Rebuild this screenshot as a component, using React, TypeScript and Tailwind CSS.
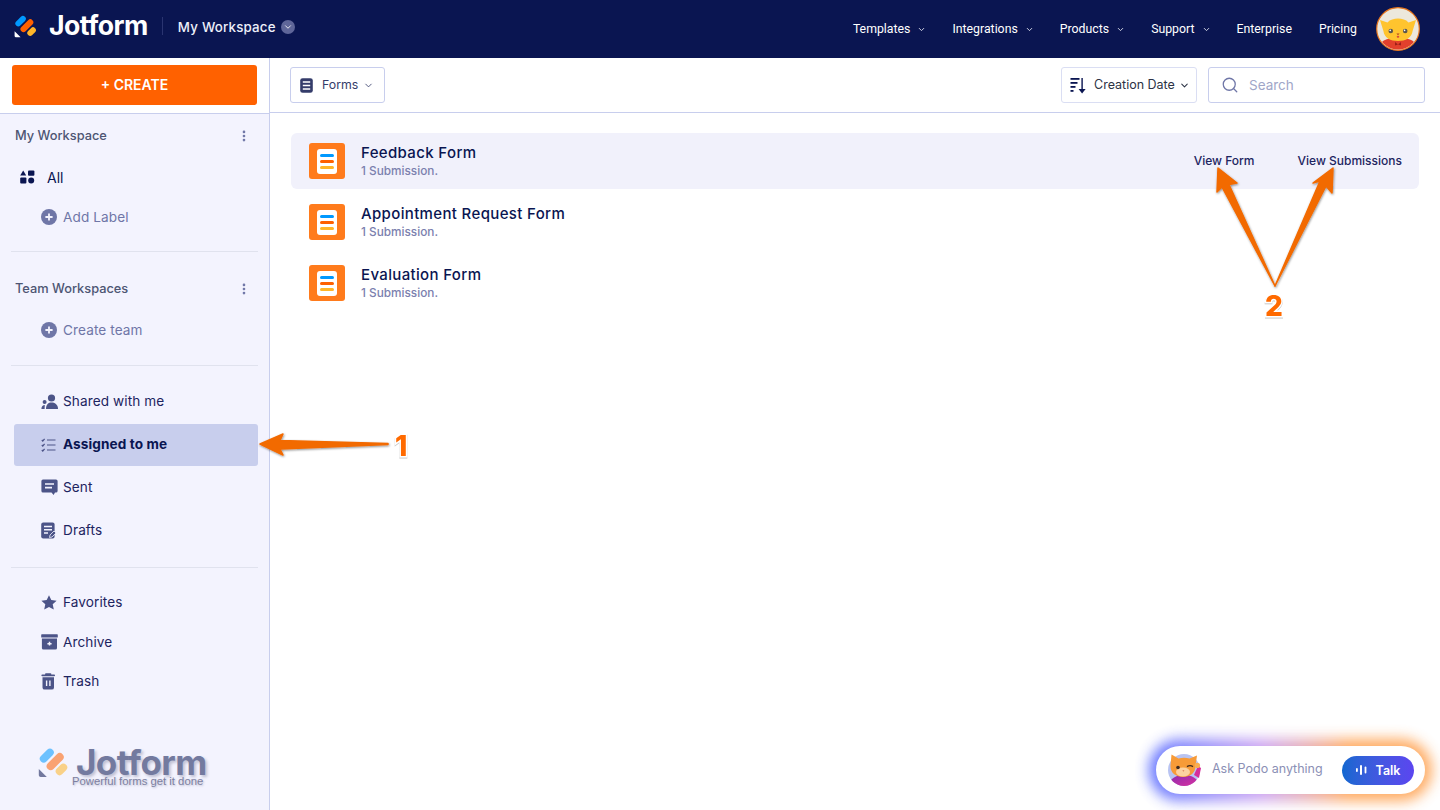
import React from "react";
import { ChevronDown, Search, MoreVertical } from "lucide-react";

const font = "font-['Inter','Liberation_Sans',sans-serif]";

function Logo({ size = 24, muted = false }: { size?: number; muted?: boolean }) {
  return (
    <svg width={size} height={size} viewBox="0 0 24 24" className={`shrink-0 ${muted ? "opacity-55" : ""}`}>
      <rect x="-6.2" y="-2.9" width="12.4" height="5.8" rx="2.9" transform="translate(6.6 7.2) rotate(-45)" fill="#0099ff" />
      <rect x="-7.8" y="-3" width="15.6" height="6" rx="3" transform="translate(12.9 11.7) rotate(-45)" fill="#ff6100" />
      <rect x="-4.9" y="-2.9" width="9.8" height="5.8" rx="2.9" transform="translate(17.6 17.6) rotate(-45)" fill="#ffb629" />
      <path d="M0.6 17.2 L6.6 23.3 H2 A1.4 1.4 0 0 1 0.6 22 Z" fill={muted ? "#0a1551" : "#ffffff"} />
    </svg>
  );
}

function Cat() {
  return (
    <svg width="44" height="44" viewBox="0 0 44 44">
      <defs>
        <clipPath id="cc"><circle cx="22" cy="22" r="20.5" /></clipPath>
      </defs>
      <circle cx="22" cy="22" r="21.3" fill="#ece8dc" stroke="#e8761d" strokeWidth="1.2" />
      <g clipPath="url(#cc)">
        <path d="M2 44 C2 34 10 31 22 31 C34 31 42 34 42 44Z" fill="#e2402c" />
        <path d="M4 13 L11.5 15.5 C14 12.5 18 11.5 22 11.5 C26 11.5 30 12.5 32.5 15.5 L40 13 L36.6 24 C35.6 31 29.5 34 22 34 C14.5 34 8.4 31 7.4 24Z" fill="#ffc42e" />
        <path d="M19 35 L22 37.4 L25 35 L25 38.6 L22 37.4 L19 38.6Z" fill="#9c2018" />
      </g>
      <circle cx="14.8" cy="24" r="2.3" fill="#5a554e" />
      <circle cx="29.2" cy="24" r="2.3" fill="#5a554e" />
      <circle cx="14.2" cy="23.4" r="0.8" fill="#fff" />
      <circle cx="28.6" cy="23.4" r="0.8" fill="#fff" />
      <path d="M20.4 26.6 H23.6 L22 28.2Z" fill="#b3471d" />
      <ellipse cx="22" cy="29.8" rx="1.3" ry="1" fill="#d94a3a" />
    </svg>
  );
}

function Podo() {
  return (
    <svg width="34" height="34" viewBox="0 0 34 34" className="shrink-0">
      <defs>
        <clipPath id="pc"><circle cx="17" cy="17" r="16" /></clipPath>
        <linearGradient id="pb" x1="0" y1="0" x2="1" y2="1">
          <stop offset="0" stopColor="#8a2bb0" />
          <stop offset="1" stopColor="#e0329e" />
        </linearGradient>
      </defs>
      <circle cx="17" cy="17" r="16" fill="#b9c4f2" />
      <g clipPath="url(#pc)">
        <path d="M1 34 C2 25 10 22 17 22 C24 22 32 25 33 34Z" fill="url(#pb)" />
      </g>
      <path d="M4.5 1.5 L11.5 5.5 C15 4.4 19 4.4 22.5 5.5 L30 2.5 L28.5 13 C28.5 20 23 24 16 24 C9 24 3 20 3.5 12.5Z" fill="#f79b38" />
      <ellipse cx="16" cy="19" rx="7" ry="4.6" fill="#fdd2a0" />
      <circle cx="11" cy="14.5" r="1.8" fill="#3f2a20" />
      <path d="M20 13.6 Q23 11.6 26 13.6" stroke="#3f2a20" strokeWidth="1.4" fill="none" />
      <path d="M15.4 17.4 H17.4 L16.4 18.6Z" fill="#c2502a" />
      <path d="M27 22 L31 13 L34 15 L32 25Z" fill="#d52f9c" />
      <circle cx="30.4" cy="12.4" r="2.7" fill="#f9ad52" />
    </svg>
  );
}

function FormIcon() {
  return (
    <div className="w-9 h-9 rounded-[3px] bg-[#ff7b1c] flex items-center justify-center shrink-0">
      <div className="w-[20px] h-[25px] bg-white rounded-[3px] flex flex-col items-center justify-center gap-[3px]">
        <div className="w-[14px] h-[3px] rounded-[1.5px] bg-[#0099ff]" />
        <div className="w-[14px] h-[3px] rounded-[1.5px] bg-[#ff6100]" />
        <div className="w-[14px] h-[3px] rounded-[1.5px] bg-[#ffb629]" />
      </div>
    </div>
  );
}

const C = "#4c5488";
const icons: Record<string, React.ReactNode> = {
  shared: (
    <svg width="18" height="16" viewBox="0 0 18 16" fill={C}>
      <circle cx="10.5" cy="4" r="3.6" />
      <path d="M5 15 C5 10.5 7.5 8.6 10.5 8.6 C13.5 8.6 17 10.5 17 15 Z" />
      <circle cx="3.6" cy="8" r="2" />
      <path d="M0.4 15 C0.4 12.5 1.8 11 3.8 11 L3.6 15Z" />
    </svg>
  ),
  assigned: (
    <svg width="15" height="14" viewBox="0 0 15 14" fill="none" stroke={C} strokeWidth="1.2">
      <path d="M6 2 H14.5 M6 7 H14.5 M6 12 H14.5" />
      <path d="M0.8 2 L1.8 3 L3.6 0.8 M0.8 7 L1.8 8 L3.6 5.8 M0.8 12 L1.8 13 L3.6 10.8" />
    </svg>
  ),
  sent: (
    <svg width="17" height="17" viewBox="0 0 17 17">
      <path d="M2 0.5 H15 A1.6 1.6 0 0 1 16.6 2 V12 A1.6 1.6 0 0 1 15 13.5 H14 L12.6 16 L10.5 13.5 H2 A1.6 1.6 0 0 1 0.4 12 V2 A1.6 1.6 0 0 1 2 0.5Z" fill={C} />
      <path d="M4 5 H13 M4 8.6 H11" stroke="#f3f3fe" strokeWidth="1.6" />
    </svg>
  ),
  drafts: (
    <svg width="15" height="17" viewBox="0 0 15 17">
      <rect x="0.2" y="0.4" width="13.4" height="16.2" rx="2" fill={C} />
      <path d="M3 4.5 H11 M3 7.8 H11 M3 11 H7" stroke="#f3f3fe" strokeWidth="1.4" />
      <path d="M8.5 15.5 L9 13 L13 9 L15 11 L11 15Z" fill={C} stroke="#f3f3fe" strokeWidth="0.8" />
    </svg>
  ),
  favorites: (
    <svg width="16" height="15" viewBox="0 0 16 15" fill={C}>
      <path d="M8 0.3 L10.3 5.1 L15.6 5.7 L11.7 9.3 L12.8 14.6 L8 12 L3.2 14.6 L4.3 9.3 L0.4 5.7 L5.7 5.1Z" />
    </svg>
  ),
  archive: (
    <svg width="17" height="16" viewBox="0 0 17 16">
      <rect x="0.2" y="0.3" width="16.6" height="3.2" rx="0.6" fill={C} />
      <path d="M0.9 4.6 H16 V14 A1.6 1.6 0 0 1 14.4 15.6 H2.5 A1.6 1.6 0 0 1 0.9 14Z" fill={C} />
      <path d="M6.4 9.8 H10.6 M8.5 7.8 V11.6" stroke="#f3f3fe" strokeWidth="1.5" />
    </svg>
  ),
  trash: (
    <svg width="15" height="17" viewBox="0 0 15 17">
      <rect x="0.4" y="1.6" width="13.6" height="1.6" rx="0.8" fill={C} />
      <rect x="4" y="0.2" width="6.4" height="2" rx="1" fill={C} />
      <path d="M1.5 4.2 H13 V14.4 A2.2 2.2 0 0 1 10.8 16.6 H3.7 A2.2 2.2 0 0 1 1.5 14.4Z" fill={C} />
      <path d="M5.6 7.6 V13 M8.9 7.6 V13" stroke="#f3f3fe" strokeWidth="1.4" />
    </svg>
  ),
};

function NavRow({ icon, label, active, h }: { icon: string; label: string; active?: boolean; h: string }) {
  return (
    <div className={`${h} ml-[14px] w-[244px] rounded-[3px] flex items-center pl-[27px] ${active ? "bg-[#c8ceed]" : ""}`}>
      <div className="w-[22px] flex justify-start shrink-0">{icons[icon]}</div>
      <span className={`text-[13.6px] tracking-[0.1px] ${active ? "font-bold text-[#0a1551] -mt-[2px]" : "font-normal text-[#1d2460]"}`}>{label}</span>
    </div>
  );
}

function AddRow({ label }: { label: string }) {
  return (
    <div className="h-[24px] flex items-center gap-[6px] pl-[41px]">
      <svg width="16" height="16" viewBox="0 0 16 16">
        <circle cx="8" cy="8" r="8" fill="#6f76a7" />
        <path d="M4.4 8 H11.6 M8 4.4 V11.6" stroke="#f3f3fe" strokeWidth="1.8" />
      </svg>
      <span className="text-[13.6px] text-[#6f76a7] tracking-[0.1px]">{label}</span>
    </div>
  );
}

function Heading({ label }: { label: string }) {
  return (
    <div className="h-[20px] pl-[15px] pr-[18px] flex items-center justify-between">
      <span className="text-[12.8px] font-medium text-[#4d5573]">{label}</span>
      <MoreVertical size={14} strokeWidth={2.6} className="text-[#6f76a7]" />
    </div>
  );
}

function Divider({ className }: { className: string }) {
  return <div className={`h-px mx-[11px] w-[247px] bg-[#e0e2ee] ${className}`} />;
}

function NavLink({ label, chevron }: { label: string; chevron?: boolean }) {
  return (
    <div className="flex items-center gap-[7px] text-white text-[12.3px] font-normal font-['Roboto','Inter',sans-serif]">
      <span>{label}</span>
      {chevron && <ChevronDown size={9} strokeWidth={2.4} className="-mr-px text-[#dfe1ee]" />}
    </div>
  );
}

function FormRow({ title, hover }: { title: string; hover?: boolean }) {
  return (
    <div className={`h-[56px] rounded-[6px] flex items-center pl-[18px] pr-[17px] ${hover ? "bg-[#f1f1fb]" : ""}`}>
      <FormIcon />
      <div className="ml-[16px] flex-1 flex flex-col">
        <span className="text-[15px] leading-[18px] font-medium text-[#0a1551] tracking-[0.35px]">{title}</span>
        <span className="text-[11.8px] leading-[17px] font-medium text-[#7b80ae] mt-px -mb-px">1 Submission.</span>
      </div>
      {hover && (
        <div className="flex items-center gap-[43px] text-[12px] font-medium text-[#1d2460] -mt-[1px]">
          <span>View Form</span>
          <span>View Submissions</span>
        </div>
      )}
    </div>
  );
}

const digit = "absolute text-[28px] leading-[32px] font-extrabold text-[#ff6a00] [-webkit-text-stroke:3px_#fff] [paint-order:stroke_fill] [filter:drop-shadow(0_1px_0.5px_rgba(0,0,0,0.22))]";

export default function App() {
  return (
    <div className={`relative w-[1440px] h-[810px] overflow-hidden bg-white ${font}`}>
      <header className="h-[58px] bg-[#0a1551] flex items-center pl-[14px] pr-[20px]">
        <div className="-mt-[6px] flex items-center">
          <Logo size={24} />
          <span className="ml-[11px] text-[26.6px] font-bold text-white tracking-[-0.5px] font-['Inter',sans-serif]">Jotform</span>
          <div className="ml-[14px] h-[18px] w-px bg-[#2a3470]" />
          <span className="ml-[15px] mt-[3px] text-[13.3px] font-medium text-[#eef0fa] tracking-[0.2px]">My Workspace</span>
          <div className="ml-[5px] mt-[3px] w-[14px] h-[14px] rounded-full bg-[#5f6699] flex items-center justify-center">
            <ChevronDown size={10} strokeWidth={2} className="text-white" />
          </div>
        </div>
        <nav className="ml-auto flex items-center">
          <div className="flex items-center gap-[27px]">
            <NavLink label="Templates" chevron />
            <NavLink label="Integrations" chevron />
            <NavLink label="Products" chevron />
            <NavLink label="Support" chevron />
            <NavLink label="Enterprise" />
            <NavLink label="Pricing" />
          </div>
          <div className="ml-[19px] -mt-[1px]"><Cat /></div>
        </nav>
      </header>

      <div className="flex h-[752px]">
        <aside className="w-[270px] shrink-0 bg-[#f3f3fe] border-r border-[#c8ceed] flex flex-col">
          <div className="h-[56px] bg-white border-b border-[#c8ceed] pt-[7px] pl-[12px] shrink-0">
            <div className="w-[245px] h-[40px] pb-[2px] bg-[#ff6100] rounded-[3px] flex items-center justify-center text-white text-[14px] font-semibold">
              + CREATE
            </div>
          </div>
          <div className="mt-[12px]"><Heading label="My Workspace" /></div>
          <div className="mt-[19px] h-[24px] flex items-center pl-[20px]">
            <svg width="15" height="14" viewBox="0 0 15 14" fill="#0a1551">
              <path d="M3.2 0.4 L6.2 5.6 H0.2Z" />
              <rect x="8" y="0.4" width="6.4" height="5.4" rx="1" />
              <rect x="0.2" y="7.6" width="6.2" height="6" rx="1" />
              <circle cx="11.2" cy="10.6" r="3" />
            </svg>
            <span className="ml-[12px] text-[14px] text-[#0a1551]">All</span>
          </div>
          <div className="mt-[16px]"><AddRow label="Add Label" /></div>
          <Divider className="mt-[22px]" />
          <div className="mt-[27px]"><Heading label="Team Workspaces" /></div>
          <div className="mt-[19px]"><AddRow label="Create team" /></div>
          <Divider className="mt-[23px]" />
          <div className="mt-[13px] flex flex-col">
            <NavRow icon="shared" label="Shared with me" h="h-[45px]" />
            <NavRow icon="assigned" label="Assigned to me" active h="h-[42px]" />
            <NavRow icon="sent" label="Sent" h="h-[43px]" />
            <NavRow icon="drafts" label="Drafts" h="h-[43px]" />
          </div>
          <Divider className="mt-[15px]" />
          <div className="mt-[14px] flex flex-col">
            <NavRow icon="favorites" label="Favorites" h="h-[40px]" />
            <NavRow icon="archive" label="Archive" h="h-[40px]" />
            <NavRow icon="trash" label="Trash" h="h-[39px]" />
          </div>
          <div className="mt-[49px] ml-[38px]">
            <div className="flex items-center h-[24px]">
              <Logo size={32} muted />
              <span className="ml-[6px] text-[35px] leading-[24px] font-bold text-[#737a9f] tracking-[-0.6px] [text-shadow:2px_2px_3px_rgba(30,35,80,0.25)] font-['Inter',sans-serif]">Jotform</span>
            </div>
            <span className="block mt-px ml-[34px] text-[11.3px] leading-[13px] text-[#7c80a0] font-['Liberation_Sans',sans-serif] [text-shadow:1px_1px_2px_rgba(30,35,80,0.25)]">Powerful forms get it done</span>
          </div>
        </aside>

        <main className="flex-1 flex flex-col min-w-0">
          <div className="h-[55px] border-b border-[#c8ceed] flex items-center pl-[20px] pr-[15px] shrink-0">
            <div className="h-[36px] w-[95px] border border-[#c8ceed] rounded-[3px] flex items-center pl-[9px]">
              <svg width="13" height="15" viewBox="0 0 13 15">
                <rect x="0.2" y="0.2" width="12.6" height="14.6" rx="2.4" fill="#343c6a" />
                <path d="M2.8 4 H10.2 M2.8 7.5 H10.2 M2.8 11 H10.2" stroke="#fff" strokeWidth="1.5" />
              </svg>
              <span className="ml-[9px] text-[12.3px] text-[#343c6a]">Forms</span>
              <ChevronDown size={11} strokeWidth={1.8} className="ml-[5px] text-[#343c6a]" />
            </div>
            <div className="ml-auto h-[36px] w-[136px] border border-[#dadef3] rounded-[3px] flex items-center pl-[8px]">
              <svg width="16" height="17" viewBox="0 0 16 17" fill="#0a1551">
                <rect x="0.5" y="1" width="9" height="1.8" />
                <rect x="0.5" y="5" width="7" height="1.8" />
                <rect x="0.5" y="9" width="5" height="1.8" />
                <rect x="0.5" y="13" width="3" height="1.8" />
                <rect x="11.4" y="1" width="1.4" height="12" />
                <path d="M8.6 12 H15.6 L12.1 16.6Z" />
              </svg>
              <span className="ml-[8px] text-[12.5px] text-[#2c3345] whitespace-nowrap">Creation Date</span>
              <ChevronDown size={11} strokeWidth={2.2} className="ml-[4px] text-[#2c3345]" />
            </div>
            <div className="ml-[11px] h-[36px] w-[217px] border border-[#c8ceed] rounded-[3px] flex items-center pl-[12px]">
              <Search size={18} strokeWidth={1.7} className="text-[#6f76a7]" />
              <span className="ml-[10px] text-[13.5px] text-[#a0a6c8]">Search</span>
            </div>
          </div>
          <div className="pt-[20px] pl-[21px] pr-[21px] flex flex-col gap-[5px]">
            <FormRow title="Feedback Form" hover />
            <FormRow title="Appointment Request Form" />
            <FormRow title="Evaluation Form" />
          </div>
        </main>
      </div>

      {/* annotation arrows */}
      <svg className="absolute left-0 top-0 pointer-events-none" width="1440" height="810">
        <defs>
          <filter id="sh" x="-20%" y="-20%" width="140%" height="140%">
            <feDropShadow dx="0.6" dy="1" stdDeviation="0.8" floodColor="#000" floodOpacity="0.45" />
          </filter>
        </defs>
        <g fill="#f26a05" stroke="#f26a05" strokeWidth="1.5" strokeLinejoin="round" filter="url(#sh)">
          <path d="M260 444 L283 434 L280 440.5 L388 443.5 L388 444.5 L280 449 L283 455 Z" />
          <path d="M1218 168 L1237 183 L1229 184.5 L1275 286 L1222 187 L1217 192 Z" />
          <path d="M1333 168 L1332 193 L1326 186 L1275 286 L1320 181 L1313 183 Z" />
        </g>
      </svg>
      <span className={`${digit} left-[395px] top-[430px]`}>1</span>
      <span className={`${digit} left-[1265px] top-[290px]`}>2</span>

      {/* Podo widget */}
      <div className="absolute left-[1150px] top-[740px] w-[281px] h-[60px]">
        <div className="absolute -inset-[1px] rounded-full blur-[7px] opacity-90 bg-gradient-to-r from-[#4f63ff] via-[#c79af0] via-40% to-[#ffa14f] to-70%" />
        <div className="absolute left-[6px] top-[6px] w-[269px] h-[48px] rounded-full bg-white flex items-center pl-[11px] pr-[11px]">
          <Podo />
          <span className="ml-[11px] -mt-[2px] text-[12.5px] text-[#8b8fb5]">Ask Podo anything</span>
          <div className="ml-auto w-[72px] h-[29px] rounded-full bg-gradient-to-r from-[#0f67d0] to-[#5b45f0] flex items-center justify-center gap-[9px]">
            <svg width="11" height="12" viewBox="0 0 11 12" fill="#fff">
              <rect x="0" y="4" width="1.8" height="4" rx="0.9" />
              <rect x="4" y="1" width="2" height="10" rx="1" />
              <rect x="8.6" y="2.5" width="1.8" height="7" rx="0.9" />
            </svg>
            <span className="pt-[2px] text-[12.5px] font-semibold text-white">Talk</span>
          </div>
        </div>
      </div>
    </div>
  );
}
